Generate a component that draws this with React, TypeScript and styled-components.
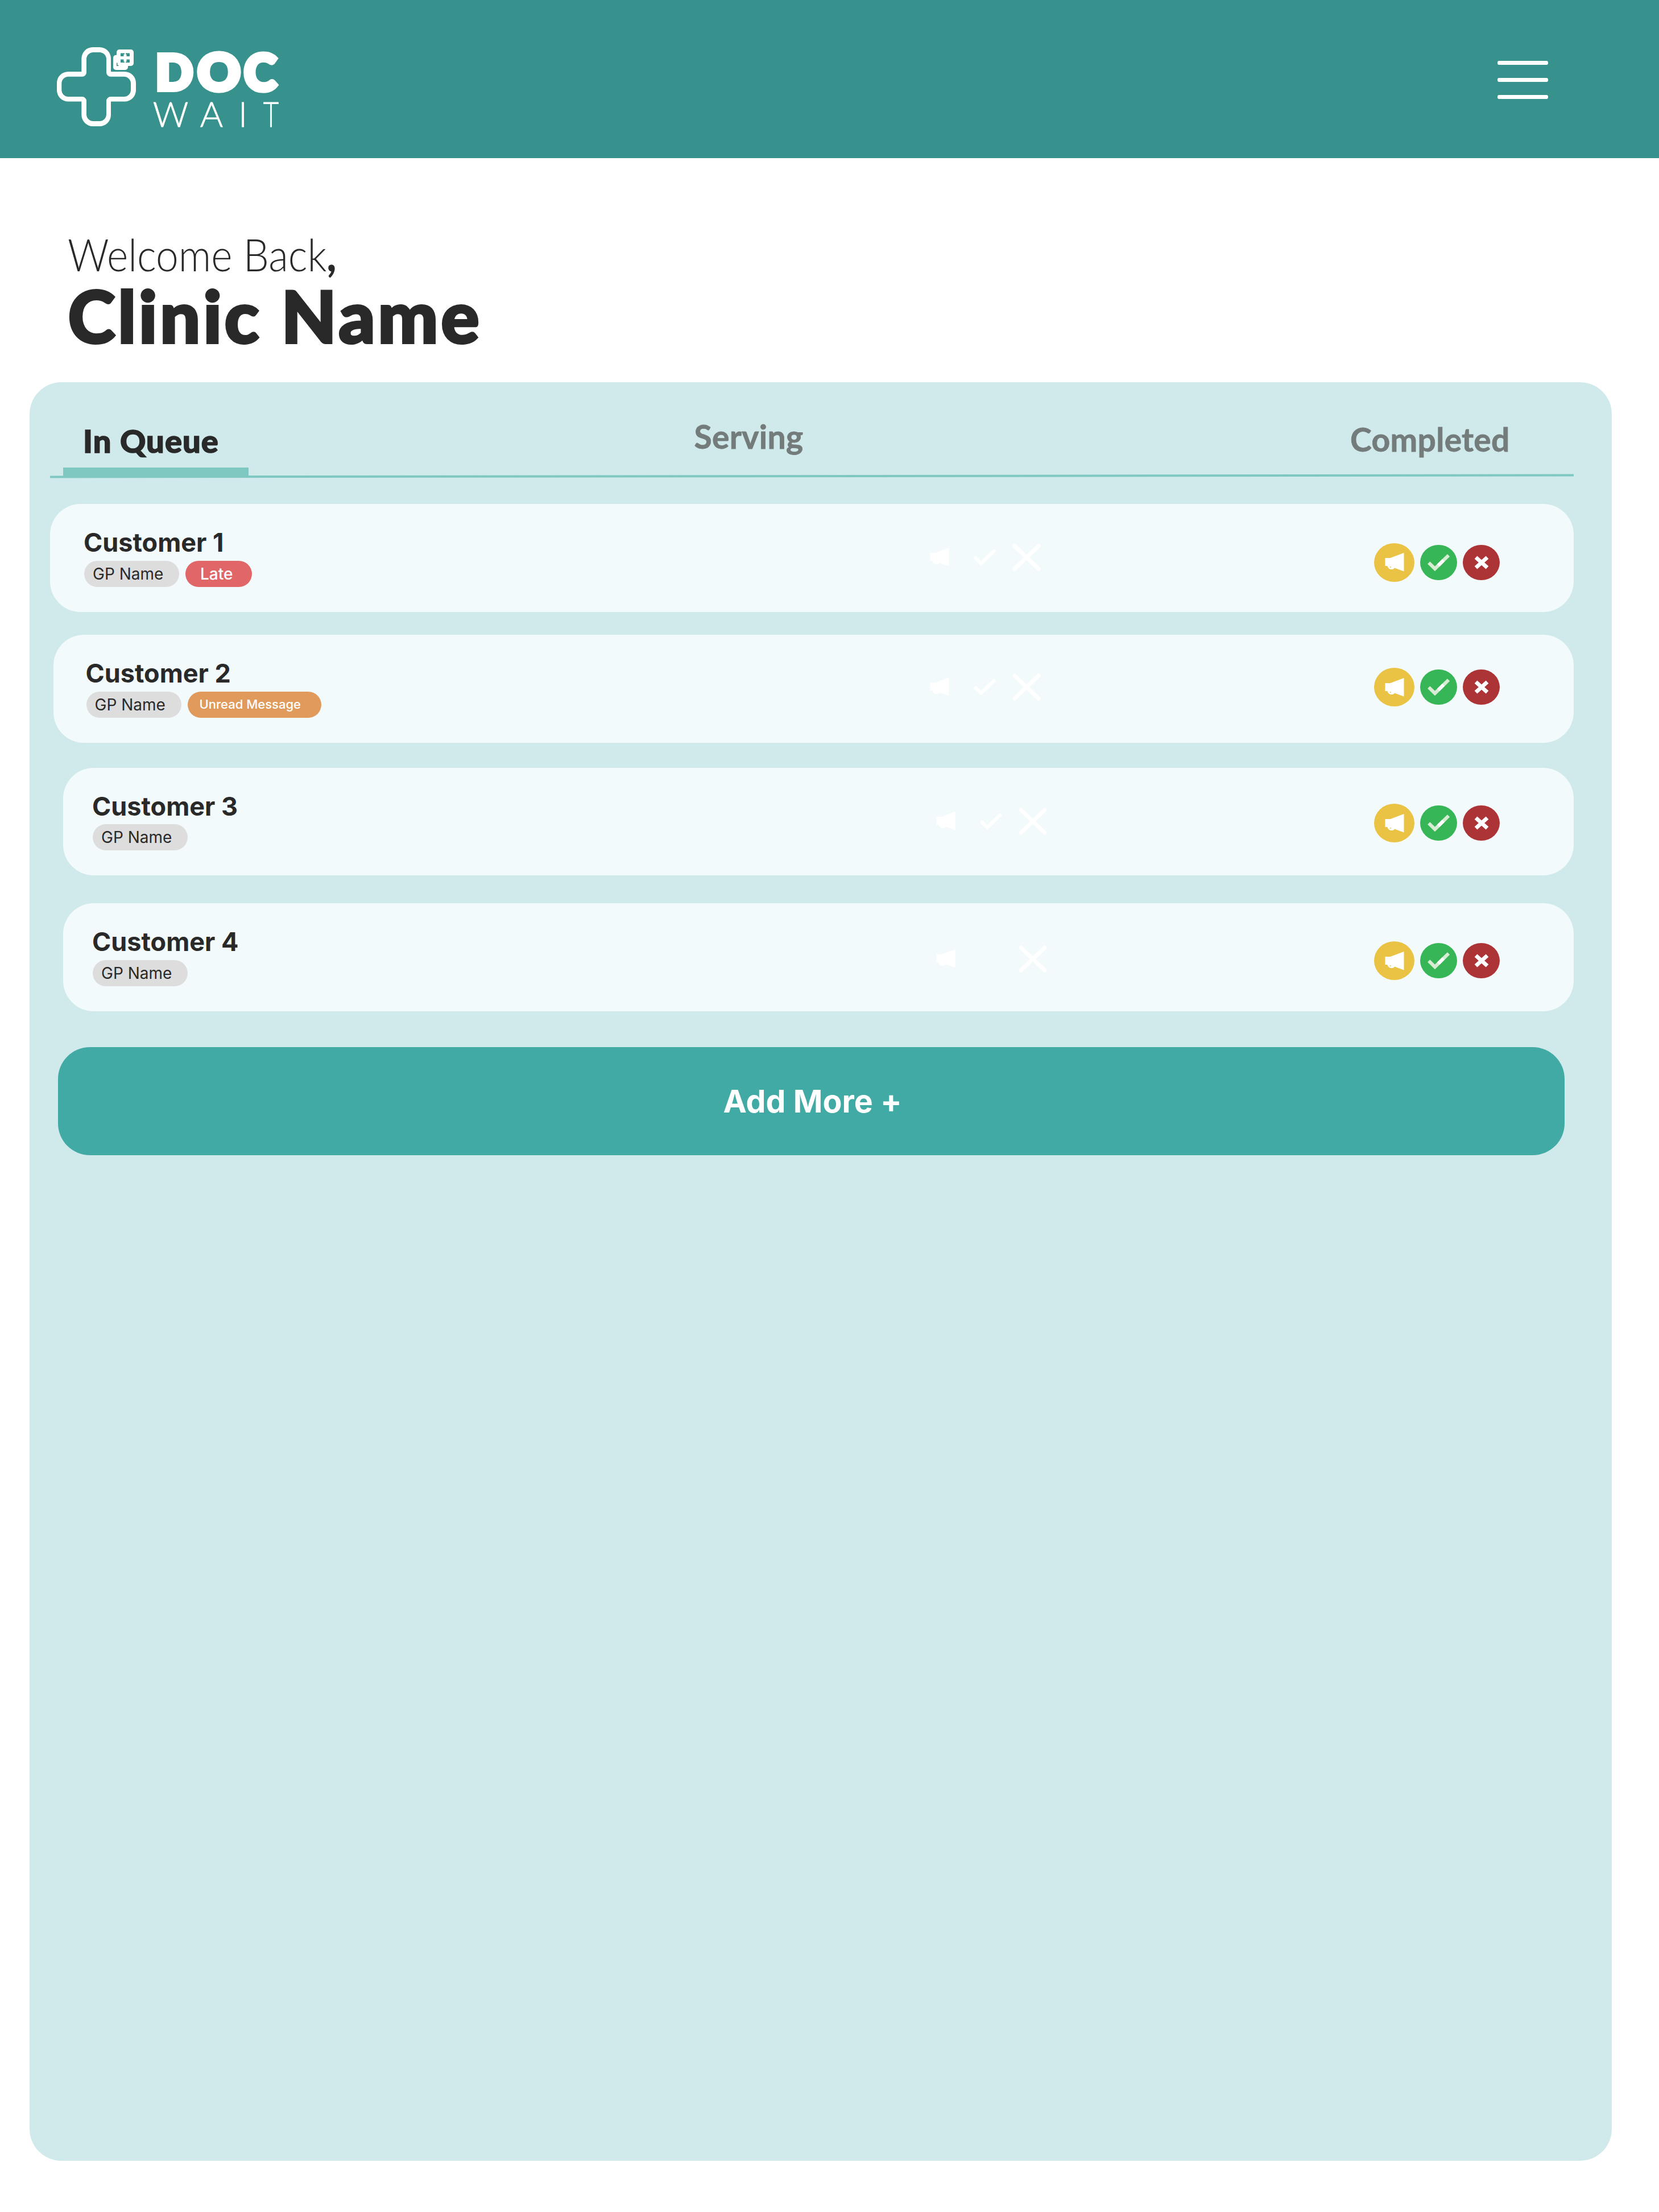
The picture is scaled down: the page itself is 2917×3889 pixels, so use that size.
import React from "react";
import styled, { createGlobalStyle } from "styled-components";

const color = {
  header: "#37918c",
  panel: "#d0eaec",
  card: "#f2fafc",
  line: "#7fc8c2",
  button: "#42aaa4",
  ink: "#292929",
  muted: "#747c7b",
  pill: "#dddddd",
  late: "#e06668",
  unread: "#e09b5c",
  call: "#eac344",
  done: "#37b657",
  remove: "#ac3336",
};

const GlobalStyle = createGlobalStyle`
  *, *::before, *::after { box-sizing: border-box; }
  body { margin: 0; background: #fff; color: ${color.ink}; font-family: Inter, "Liberation Sans", sans-serif; }
  h1, p { margin: 0; }
  button { border: 0; padding: 0; font: inherit; cursor: pointer; }
  svg { display: block; flex: none; }
`;

const Page = styled.div`
  display: flex;
  flex-direction: column;
  width: 2917px;
  height: 3889px;
  overflow: hidden;
`;

const Header = styled.header`
  display: flex;
  justify-content: space-between;
  align-items: flex-start;
  height: 278px;
  padding: 60px 195px 0 96px;
  background: ${color.header};
`;

const MenuButton = styled.button`
  display: flex;
  flex-direction: column;
  gap: 23.3px;
  width: 89px;
  margin-top: 47px;
  background: none;
`;

const MenuBar = styled.span`
  height: 6.7px;
  border-radius: 3px;
  background: #fff;
`;

const Greeting = styled.section`
  height: 394px;
  padding: 128.8px 0 0 118.5px;
  font-family: Lato, "Open Sans", sans-serif;
`;

const Welcome = styled.p`
  width: max-content;
  font-size: 78px;
  font-weight: 300;
  line-height: 80px;
  white-space: nowrap;
  transform: scaleX(0.915);
  transform-origin: left;

  b { font-weight: 900; }
`;

const ClinicName = styled.h1`
  margin: 7.8px 0 0 1px;
  font-size: 126px;
  font-weight: 900;
  line-height: 120px;
  letter-spacing: 4.6px;
  white-space: nowrap;
  -webkit-text-stroke: 4px ${color.ink};
`;

const Panel = styled.main`
  display: flex;
  flex-direction: column;
  height: 3127px;
  margin: 0 83px 0 52px;
  padding: 0 67px 0 36px;
  border-radius: 56px;
  background: ${color.panel};
`;

const Tabs = styled.nav`
  display: grid;
  grid-template-columns: 1110px 1155px auto;
  height: 165px;
  padding-left: 23px;
`;

const Tab = styled.button<{ $top: number; $active?: boolean }>`
  display: flex;
  flex-direction: column;
  justify-content: space-between;
  align-items: flex-start;
  padding-top: ${(p) => p.$top}px;
  background: none;
  color: ${(p) => (p.$active ? color.ink : color.muted)};
  font-family: Lato, "Open Sans", sans-serif;
  font-size: ${(p) => (p.$active ? 56 : 57)}px;
  font-weight: ${(p) => (p.$active ? 900 : 700)};
  line-height: 60px;
  letter-spacing: ${(p) => (p.$active ? 1.1 : 0.3)}px;
  -webkit-text-stroke: ${(p) => (p.$active ? 1.5 : 0.8)}px currentColor;
  white-space: nowrap;
`;

const TabLabel = styled.span<{ $indent: number }>`
  margin-left: ${(p) => p.$indent}px;
`;

const ActiveBar = styled.span`
  width: 326px;
  height: 15px;
  background: ${color.line};
`;

const Rule = styled.div`
  height: 4px;
  margin-top: -2.5px;
  background: ${color.line};
  transform: rotate(-0.06deg);
`;

const CardList = styled.div`
  display: flex;
  flex-direction: column;
  padding-top: 47.5px;
`;

const Card = styled.article<{ $indent: number; $gap: number }>`
  display: flex;
  align-items: center;
  height: 189.5px;
  margin: ${(p) => p.$gap}px 0 0 ${(p) => p.$indent}px;
  padding-right: 130px;
  border-radius: 54px;
  background: ${color.card};
`;

const Details = styled.div<{ $indent: number }>`
  flex: 1;
  align-self: stretch;
  padding: 43.2px 0 0 ${(p) => p.$indent}px;
`;

const Name = styled.p`
  margin-left: -1px;
  font-size: 45px;
  font-weight: 700;
  line-height: 50px;
`;

const Pills = styled.div`
  display: flex;
  gap: 11px;
  margin-top: 6.8px;
`;

const Pill = styled.span<{ $tone: "plain" | "late" | "unread" }>`
  width: ${(p) => ({ plain: 167, late: 117, unread: 235 })[p.$tone]}px;
  height: 46px;
  padding-left: ${(p) => ({ plain: 15, late: 26, unread: 21 })[p.$tone]}px;
  border-radius: 23px;
  background: ${(p) => ({ plain: color.pill, late: color.late, unread: color.unread })[p.$tone]};
  color: ${(p) => (p.$tone === "plain" ? color.ink : "#fff")};
  font-size: ${(p) => (p.$tone === "unread" ? 22 : 28)}px;
  font-weight: ${(p) => (p.$tone === "plain" ? 400 : 450)};
  line-height: ${(p) => (p.$tone === "unread" ? 45 : 47)}px;
  white-space: nowrap;
`;

const IconSet = styled.div<{ $shift: number; $after: number }>`
  display: flex;
  align-items: center;
  margin: ${(p) => p.$shift * 2}px ${(p) => p.$after}px 0 0;
`;

const IconSlot = styled.div<{ $after: number; $hidden?: boolean }>`
  margin-right: ${(p) => p.$after}px;
  visibility: ${(p) => (p.$hidden ? "hidden" : "visible")};
`;

const Actions = styled.div<{ $shift: number }>`
  display: flex;
  align-items: center;
  gap: 10px;
  margin-top: ${(p) => p.$shift * 2}px;
`;

const ActionButton = styled.button<{ $tone: "call" | "done" | "remove" }>`
  display: grid;
  place-items: center;
  width: ${(p) => (p.$tone === "call" ? 71 : 65)}px;
  height: ${(p) => (p.$tone === "call" ? 68 : 62)}px;
  border-radius: 50%;
  background: ${(p) => color[p.$tone]};
`;

const AddButton = styled.button`
  width: 2649px;
  height: 190px;
  margin: 63.5px 0 0 14px;
  padding-left: 4px;
  border-radius: 56px;
  background: ${color.button};
  color: #fff;
  font-size: 55.5px;
  font-weight: 700;
  line-height: 60px;
`;

const Logo = () => (
  <svg width="400" height="190" viewBox="96 60 400 190" fill="#fff" aria-label="Doc Wait">
    <path
      d="M163 83H175A20 20 0 0 1 195 103V126H219A20 20 0 0 1 239 146V158.500A20 20 0 0 1 219 178.500H195V202A20 20 0 0 1 175 222H163A20 20 0 0 1 143.300 202V178.500H120A20 20 0 0 1 100 158.500V146A20 20 0 0 1 120 126H143.300V103A20 20 0 0 1 163 83Z
      M164 92A12 12 0 0 0 152 104V127A7.500 7.500 0 0 1 144.500 134.700H120A12 12 0 0 0 108.300 146.500V158A12 12 0 0 0 120 170H144.500A7.500 7.500 0 0 1 152 177.500V201A12 12 0 0 0 164 213H175A12 12 0 0 0 187 201V177.500A7.500 7.500 0 0 1 194.500 170H218A12 12 0 0 0 230 158V146.500A12 12 0 0 0 218 134.700H194.500A7.500 7.500 0 0 1 187 127V104A12 12 0 0 0 175 92Z"
      fillRule="evenodd"
    />
    <rect x="199" y="96.700" width="26" height="26.300" rx="5" />
    <rect x="205" y="87" width="30" height="29" rx="5" />
    <g fill={color.header}>
      <path d="M212 93.500H219V95.500H217.500V99H212Z M221 93.500H228V99H222.500V95.500H221Z M212 104.500H217.500V108.500H219V110H212Z M222.500 104.500H228V110H221V108.500H222.500Z" />
      <path d="M205 110.500H206.500V114.500H208.500V116H205Z" />
    </g>
    <g fontFamily="Lato, sans-serif" fontWeight="900" fontSize="86" stroke="#fff" strokeWidth="8">
      <text transform="translate(273.700 157.700)">D</text>
      <text transform="translate(347.600 159.400) scale(1.075 1.03)">O</text>
      <text transform="translate(429.300 159.400) scale(1 1.03)">C</text>
    </g>
    <g fontFamily="Lato, sans-serif" fontWeight="300" fontSize="61.500" stroke="#fff" strokeWidth="0.800">
      <text transform="translate(268.700 223)">W</text>
      <text transform="translate(351.700 223)">A</text>
      <text transform="translate(419 223)">I</text>
      <text transform="translate(462.700 223) scale(0.77 1)">T</text>
    </g>
  </svg>
);

const Megaphone = ({ dot }: { dot?: boolean }) => (
  <svg width="34" height="33" viewBox="0 0 34 33" fill="#fff">
    <path d="M0.500 9H9.500L33.500 0V32.500L17 26.500C15 30 7 30.500 5 24.500L4 23H0.500Z" />
    {dot && <circle cx="10" cy="25" r="1" fill={color.call} />}
  </svg>
);

const Check = () => (
  <svg width="39" height="30" viewBox="0 0 39 30" fill="none" strokeWidth="6">
    <path d="M2.200 15.300L13 26L37 2.300" stroke="#d8ecd4" />
    <path d="M19 20L28 11.200" stroke="#fff" />
  </svg>
);

const Cross = () => (
  <svg width="26" height="24" viewBox="0 0 26 24" stroke="#fff" strokeWidth="7">
    <path d="M3 3L23 21M23 3L3 21" />
  </svg>
);

const SoftCheck = () => (
  <svg width="39" height="30" viewBox="0 0 39 30" fill="none" stroke="#fff" strokeWidth="6" strokeLinecap="round">
    <path d="M3.500 16.500L13 25.500L35.500 4" />
  </svg>
);

const SoftCross = () => (
  <svg width="50" height="48" viewBox="0 0 50 48" stroke="#fff" strokeWidth="7" strokeLinecap="round">
    <path d="M4 4L46 44M46 4L4 44" />
  </svg>
);

type Customer = {
  name: string;
  status?: { tone: "late" | "unread"; text: string };
  indent: number;
  gap: number;
  textIndent: number;
  softShift: number;
  softAfter: number;
  softCheck: boolean;
  actionShift: number;
};

const customers: Customer[] = [
  { name: "Customer 1", status: { tone: "late", text: "Late" }, indent: 0, gap: 0, textIndent: 60, softShift: -1, softAfter: 586, softCheck: true, actionShift: 8 },
  { name: "Customer 2", status: { tone: "unread", text: "Unread Message" }, indent: 6, gap: 40.5, textIndent: 57.5, softShift: -3, softAfter: 586, softCheck: true, actionShift: -2.5 },
  { name: "Customer 3", indent: 23, gap: 44, textIndent: 52, softShift: -0.5, softAfter: 575, softCheck: true, actionShift: 2.8 },
  { name: "Customer 4", indent: 23, gap: 49, textIndent: 52, softShift: 3, softAfter: 575, softCheck: false, actionShift: 6.5 },
];

const CustomerCard = ({ c }: { c: Customer }) => (
  <Card $indent={c.indent} $gap={c.gap}>
    <Details $indent={c.textIndent}>
      <Name>{c.name}</Name>
      <Pills>
        <Pill $tone="plain">GP Name</Pill>
        {c.status && <Pill $tone={c.status.tone}>{c.status.text}</Pill>}
      </Pills>
    </Details>
    <IconSet $shift={c.softShift} $after={c.softAfter}>
      <IconSlot $after={42.5}><Megaphone /></IconSlot>
      <IconSlot $after={29.5} $hidden={!c.softCheck}><SoftCheck /></IconSlot>
      <IconSlot $after={0}><SoftCross /></IconSlot>
    </IconSet>
    <Actions $shift={c.actionShift}>
      <ActionButton $tone="call" aria-label="Call"><Megaphone dot /></ActionButton>
      <ActionButton $tone="done" aria-label="Complete"><Check /></ActionButton>
      <ActionButton $tone="remove" aria-label="Remove"><Cross /></ActionButton>
    </Actions>
  </Card>
);

export default function App() {
  return (
    <Page>
      <GlobalStyle />
      <Header>
        <Logo />
        <MenuButton aria-label="Menu">
          <MenuBar />
          <MenuBar />
          <MenuBar />
        </MenuButton>
      </Header>
      <Greeting>
        <Welcome>Welcome Back<b>,</b></Welcome>
        <ClinicName>Clinic Name</ClinicName>
      </Greeting>
      <Panel>
        <Tabs>
          <Tab $top={72.5} $active>
            <TabLabel $indent={35}>In Queue</TabLabel>
            <ActiveBar />
          </Tab>
          <Tab $top={64.5}>
            <TabLabel $indent={-0.5}>Serving</TabLabel>
          </Tab>
          <Tab $top={69.5}>
            <TabLabel $indent={-2}>Completed</TabLabel>
          </Tab>
        </Tabs>
        <Rule />
        <CardList>
          {customers.map((c) => (
            <CustomerCard key={c.name} c={c} />
          ))}
        </CardList>
        <AddButton>Add More +</AddButton>
      </Panel>
    </Page>
  );
}
